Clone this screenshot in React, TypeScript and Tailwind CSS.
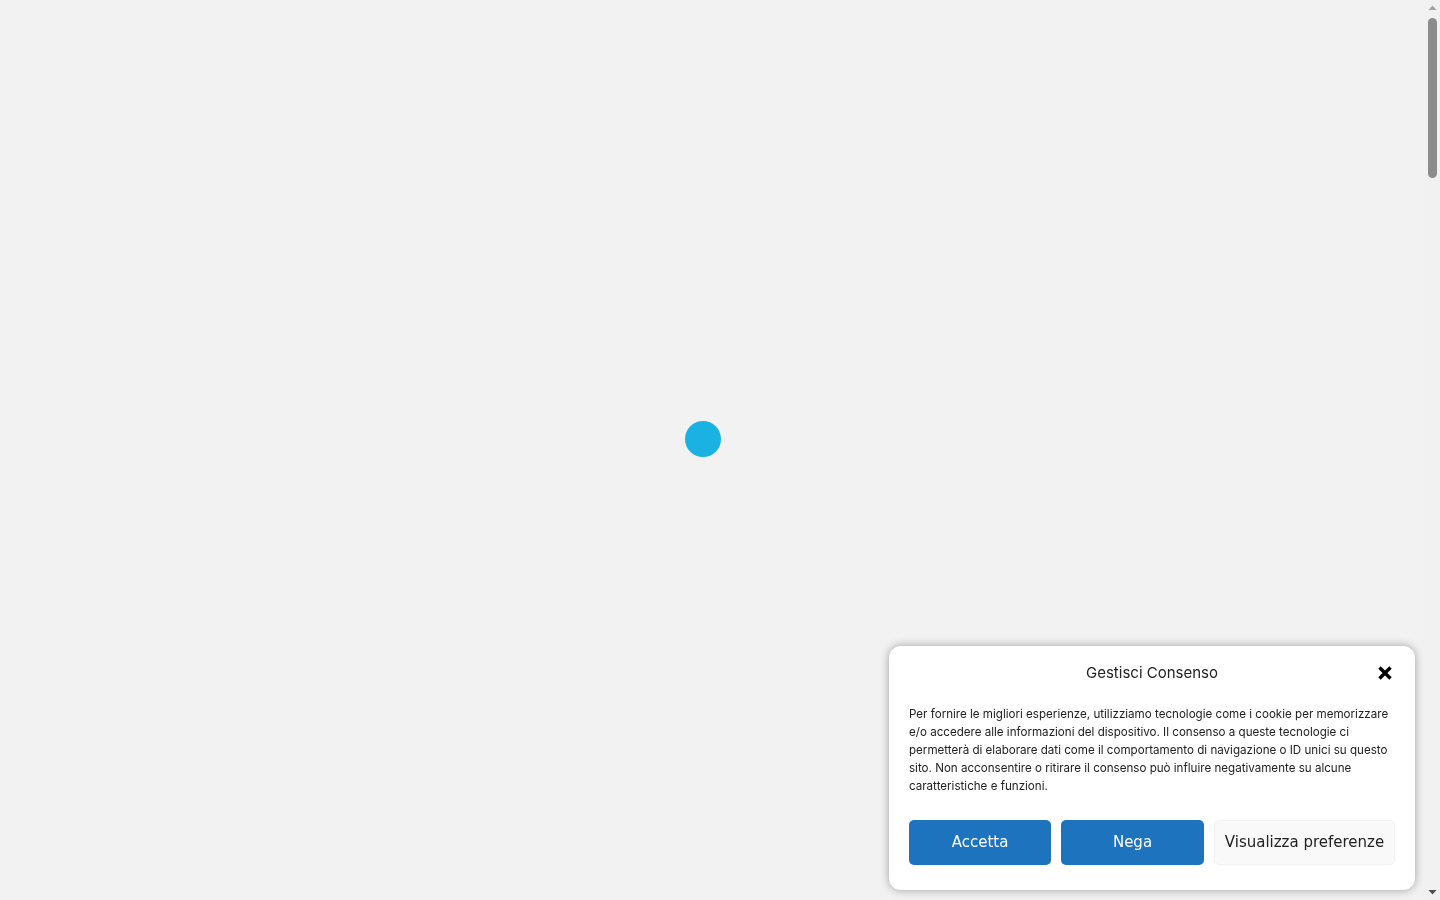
import React from 'react';

const bodyText =
  'Per fornire le migliori esperienze, utilizziamo tecnologie come i cookie per memorizzare e/o accedere alle informazioni del dispositivo. Il consenso a queste tecnologie ci permetterà di elaborare dati come il comportamento di navigazione o ID unici su questo sito. Non acconsentire o ritirare il consenso può influire negativamente su alcune caratteristiche e funzioni.';

const CloseIcon = () => (
  <svg width="16" height="16" viewBox="0 0 16 16" aria-hidden="true">
    <path
      d="M2.5 2.5 L13.5 13.5 M13.5 2.5 L2.5 13.5"
      stroke="#000"
      strokeWidth="3.4"
      strokeLinecap="butt"
    />
  </svg>
);

// page scrollbar as it appears in the screenshot
const Scrollbar = () => (
  <div className="fixed right-0 top-0 flex h-screen w-[15px] flex-col items-center bg-[#f1f1f1]">
    <svg width="15" height="15" viewBox="0 0 15 15" aria-hidden="true">
      <path d="M3.5 10 L7.5 5.5 L11.5 10 Z" fill="#a3a3a3" />
    </svg>
    <div className="mt-[3px] h-[160px] w-[9px] rounded-full bg-[#8c8c8c]" />
    <div className="flex-1" />
    <svg width="15" height="15" viewBox="0 0 15 15" aria-hidden="true">
      <path d="M3.5 5 L7.5 9.5 L11.5 5 Z" fill="#505050" />
    </svg>
  </div>
);

export const CookieBanner = () => {
  return (
    <div className="fixed right-[25px] bottom-[10px] w-[526px] rounded-[12px] bg-white px-5 pt-[17px] pb-[25px] shadow-[0_0_10px_rgba(0,0,0,0.35)]">
      <div className="relative flex items-center justify-center h-[20px]">
        <span className="font-['Inter',sans-serif] text-[15px] text-[#222]">
          Gestisci Consenso
        </span>
        <button className="absolute right-[2px] top-[2px] flex items-center justify-center">
          <CloseIcon />
        </button>
      </div>
      <p className="mt-[22px] font-['Inter',sans-serif] text-[11.6px] leading-[18px] text-[#222]">
        {bodyText}
      </p>
      <div className="mt-[25px] flex gap-[10px] font-['DejaVu_Sans',sans-serif] text-[15px]">
        <button className="h-[45px] w-[142px] rounded-[5px] bg-[#1e73be] text-white">
          Accetta
        </button>
        <button className="h-[45px] w-[143px] rounded-[5px] bg-[#1e73be] text-white">
          Nega
        </button>
        <button className="h-[45px] w-[181px] rounded-[5px] border border-[#f2f2f2] bg-[#f9f9f9] text-[#222]">
          Visualizza preferenze
        </button>
      </div>
    </div>
  );
};

export default function App() {
  return (
    <div className="min-h-screen bg-[#f2f2f2]">
      <div className="fixed left-[685px] top-[421px] h-[36px] w-[36px] rounded-full bg-[#19b2e3]" />
      <CookieBanner />
      <Scrollbar />
    </div>
  );
}
